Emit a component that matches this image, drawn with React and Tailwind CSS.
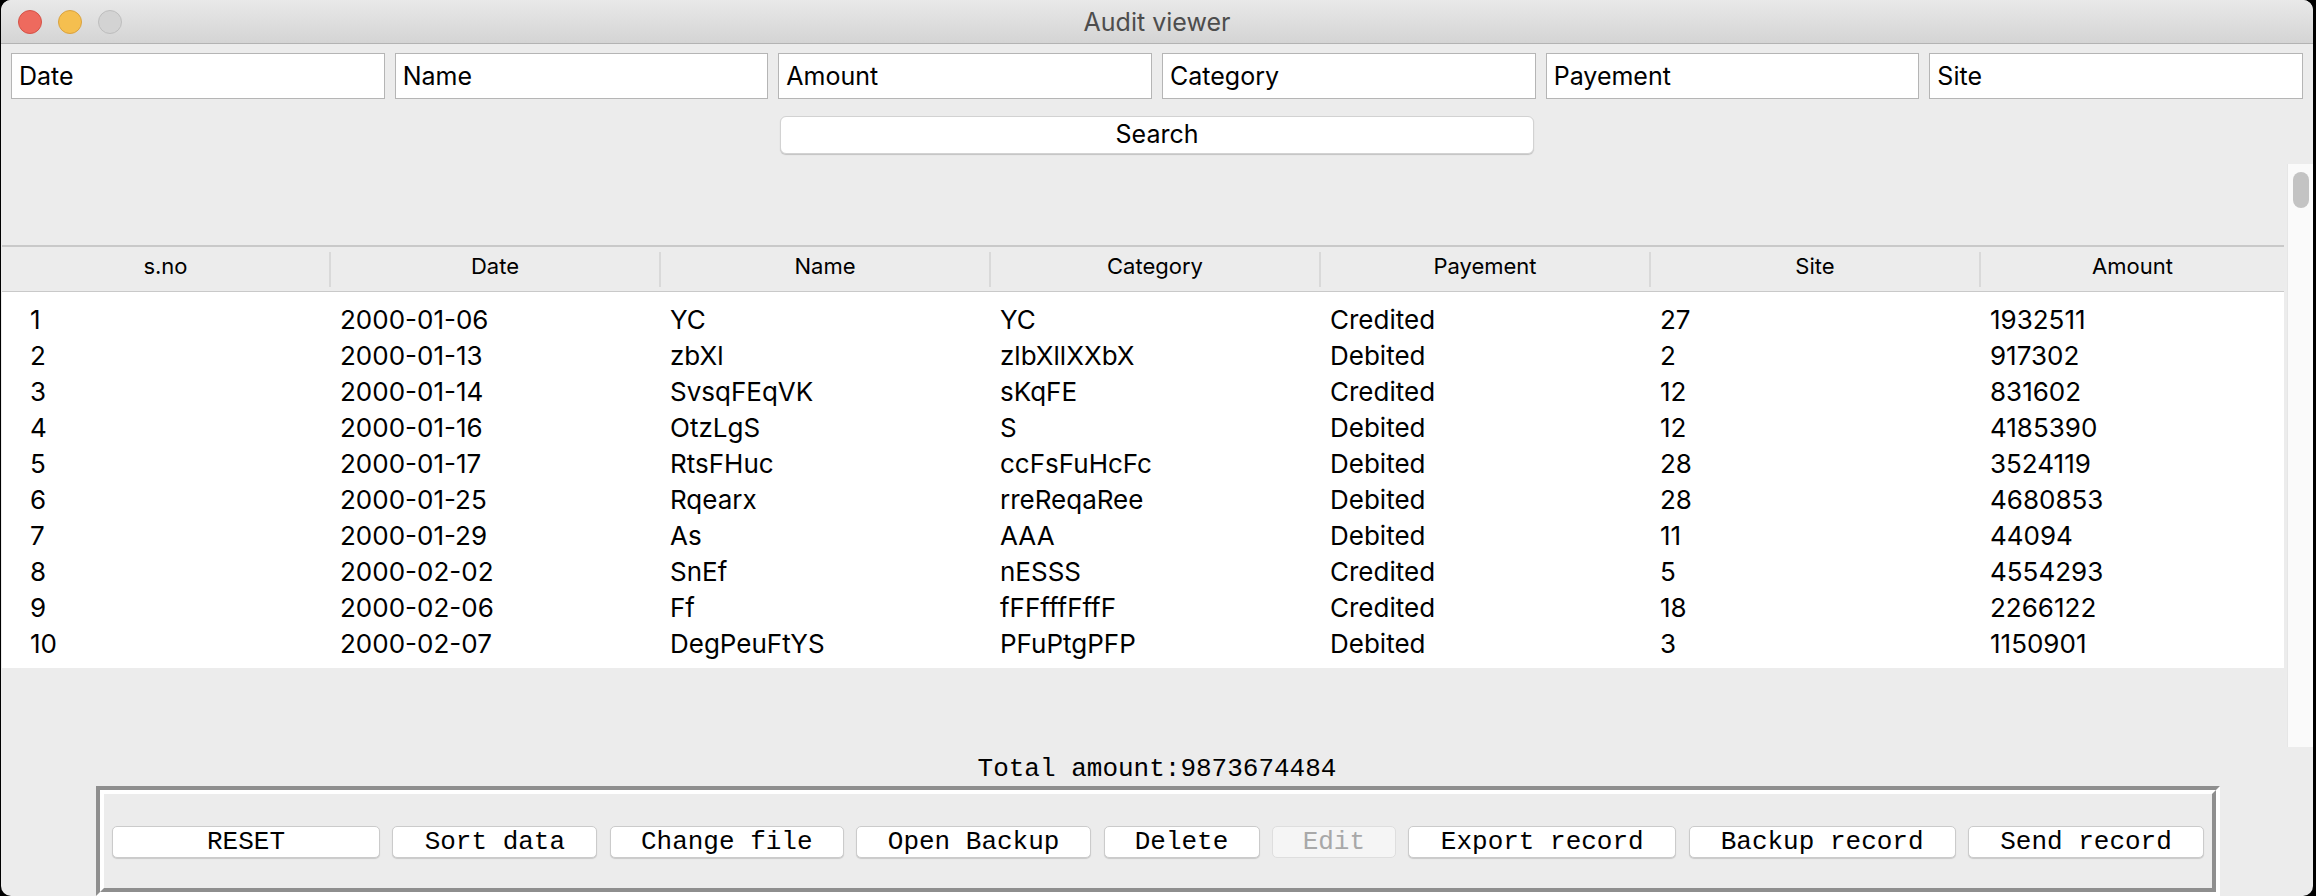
import React from "react";

const rows = [
  ["1", "2000-01-06", "YC", "YC", "Credited", "27", "1932511"],
  ["2", "2000-01-13", "zbXl", "zlbXllXXbX", "Debited", "2", "917302"],
  ["3", "2000-01-14", "SvsqFEqVK", "sKqFE", "Credited", "12", "831602"],
  ["4", "2000-01-16", "OtzLgS", "S", "Debited", "12", "4185390"],
  ["5", "2000-01-17", "RtsFHuc", "ccFsFuHcFc", "Debited", "28", "3524119"],
  ["6", "2000-01-25", "Rqearx", "rreReqaRee", "Debited", "28", "4680853"],
  ["7", "2000-01-29", "As", "AAA", "Debited", "11", "44094"],
  ["8", "2000-02-02", "SnEf", "nESSS", "Credited", "5", "4554293"],
  ["9", "2000-02-06", "Ff", "fFFfffFffF", "Credited", "18", "2266122"],
  ["10", "2000-02-07", "DegPeuFtYS", "PFuPtgPFP", "Debited", "3", "1150901"],
];

const headers = ["s.no", "Date", "Name", "Category", "Payement", "Site", "Amount"];
const inputs = ["Date", "Name", "Amount", "Category", "Payement", "Site"];

const buttons = [
  { label: "RESET", w: "w-[268px]" },
  { label: "Sort data", w: "w-[205px]" },
  { label: "Change file", w: "w-[234px]" },
  { label: "Open Backup", w: "w-[235px]" },
  { label: "Delete", w: "w-[156px]" },
  { label: "Edit", w: "w-[124px]", disabled: true },
  { label: "Export record", w: "w-[268px]" },
  { label: "Backup record", w: "w-[267px]" },
  { label: "Send record", w: "w-[236px]" },
];

const gridCols = "grid grid-cols-[327px_330px_330px_330px_330px_330px_1fr]";
const sans = "font-['Inter','Liberation_Sans',sans-serif]";
const mono = "font-['Liberation_Mono','Courier_New',monospace]";

export default function App() {
  return (
    <div className="w-[2316px] h-[896px] bg-black overflow-hidden">
      <div className={`ml-[1px] w-[2312px] h-[896px] rounded-[10px] overflow-hidden bg-[#ececec] flex flex-col ${sans}`}>
        {/* Title bar */}
        <div className="h-[44px] shrink-0 border-b border-[#b3b3b3] bg-gradient-to-b from-[#e9e9e9] to-[#d4d4d4] grid grid-cols-[1fr_auto_1fr] items-center">
          <div className="flex items-center gap-[16px] pl-[17px]">
            <span className="w-[24px] h-[24px] rounded-full bg-[#ee6a5e] border border-[#d45247]" />
            <span className="w-[24px] h-[24px] rounded-full bg-[#f5bf4f] border border-[#d9a23f]" />
            <span className="w-[24px] h-[24px] rounded-full bg-[#d3d3d3] border border-[#bdbdbd]" />
          </div>
          <div className="pt-[2px] text-[25px] leading-none text-[#4d4d4d]">Audit viewer</div>
          <div />
        </div>

        {/* Search inputs */}
        <div className="mt-[9px] h-[46px] shrink-0 px-[10px] flex gap-[10px]">
          {inputs.map((t) => (
            <div
              key={t}
              className="flex-1 h-full bg-white border border-[#b5b5b5] flex items-center pl-[7px] pt-[2px] text-[25px] text-black"
            >
              {t}
            </div>
          ))}
        </div>

        {/* Search button */}
        <div className="mt-[17px] h-[38px] shrink-0 flex justify-center">
          <div className="w-[754px] h-full bg-white rounded-[6px] border border-[#d2d2d2] shadow-[0_1px_1px_rgba(0,0,0,0.18)] flex items-center justify-center text-[25px] text-black">
            Search
          </div>
        </div>

        {/* Table area */}
        <div className="mt-[10px] h-[583px] shrink-0 flex">
          <div className="w-[2282px] ml-[1px] flex flex-col">
            <div className="h-[81px]" />
            <div className={`h-[47px] ${gridCols} items-center border-t-2 border-b border-[#c9c9c9] bg-[#ececec] text-[22px] text-black`}>
              {headers.map((h, i) => (
                <div
                  key={h}
                  className={`h-[35px] pb-[6px] flex items-center justify-center ${i > 0 ? "border-l-2 border-[#d9d9d9]" : ""}`}
                >
                  {h}
                </div>
              ))}
            </div>
            <div className="h-[376px] bg-white pt-[8px] text-[26px] text-black">
              {rows.map((r) => (
                <div key={r[0]} className={`h-[36px] ${gridCols} items-center`}>
                  {r.map((c, i) => (
                    <div key={i} className={i === 0 ? "pl-[28px]" : "pl-[11px]"}>
                      {c}
                    </div>
                  ))}
                </div>
              ))}
            </div>
          </div>
          <div className="ml-[3px] w-[26px] h-full bg-[#fafafa] border-l border-[#e6e6e6] pt-[8px] pl-[5px]">
            <div className="w-[16px] h-[36px] rounded-full bg-[#c3c3c3]" />
          </div>
        </div>

        {/* Total */}
        <div className={`h-[39px] shrink-0 pt-[6px] flex items-center justify-center text-[26px] text-black ${mono}`}>
          Total amount:9873674484
        </div>

        {/* Button frame */}
        <div className="h-[110px] shrink-0 ml-[95px] w-[2124px] border-4 border-t-[#8e8e8e] border-l-[#8e8e8e] border-r-white border-b-white">
          <div className="h-full border-4 border-t-white border-l-white border-r-[#8e8e8e] border-b-[#8e8e8e] px-[8px] pt-[32px] pb-[22px] flex justify-between items-start">
            {buttons.map((b) => (
              <div
                key={b.label}
                className={`${b.w} h-[32px] rounded-[5px] flex items-center justify-center text-[26px] leading-none ${mono} ${
                  b.disabled
                    ? "bg-[#f5f5f5] border border-[#dedede] text-[#a8a8a8]"
                    : "bg-white border border-[#cbcbcb] shadow-[0_1px_1px_rgba(0,0,0,0.15)] text-black"
                }`}
              >
                {b.label}
              </div>
            ))}
          </div>
        </div>
      </div>
    </div>
  );
}
